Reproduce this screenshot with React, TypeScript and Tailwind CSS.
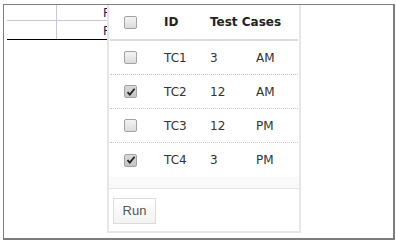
import React from 'react';

type Row = { id: string; count: string; period: string; checked: boolean };

const rows: Row[] = [
  { id: 'TC1', count: '3', period: 'AM', checked: false },
  { id: 'TC2', count: '12', period: 'AM', checked: true },
  { id: 'TC3', count: '12', period: 'PM', checked: false },
  { id: 'TC4', count: '3', period: 'PM', checked: true },
];

function Box({ checked }: { checked: boolean }) {
  return (
    <span
      className={`ml-[14px] flex h-[13px] w-[13px] items-center justify-center rounded-[2px] border border-[#a3a3a3] ${
        checked
          ? 'bg-gradient-to-b from-[#d9d9d9] to-[#c4c4c4]'
          : 'bg-gradient-to-b from-[#f4f4f4] to-[#dcdcdc]'
      }`}
    >
      {checked && (
        <svg width="10" height="10" viewBox="0 0 10 10">
          <path d="M1.5 5.2 L3.8 7.6 L8.6 1.8" fill="none" stroke="#222" strokeWidth="1.8" />
        </svg>
      )}
    </span>
  );
}

export default function App() {
  return (
    <div className="h-[243px] w-[396px] bg-white pl-[3px] pt-[4px] font-['DejaVu_Sans',sans-serif]">
      <div className="relative h-[236px] w-[392px] border-b-2 border-l border-r-2 border-t border-[#7d7d7d] bg-white">
        {/* table behind the dropdown */}
        <div className="ml-[3px] w-[101px] overflow-hidden text-[12px] text-[#1c1c5c]">
          <div className="flex h-[16px] border-b border-[#c6c6de]">
            <div className="w-[50px] shrink-0 border-r border-[#c6c6de]" />
            <div className="whitespace-nowrap pl-[46px] pt-[1px] leading-[14px]">F</div>
          </div>
          <div className="flex h-[19px] border-b border-black">
            <div className="w-[50px] shrink-0 border-r border-[#c6c6de]" />
            <div className="whitespace-nowrap pl-[46px] pt-[3px] leading-[14px]">F</div>
          </div>
        </div>

        {/* dropdown panel */}
        <div className="absolute left-[103px] top-0 flex h-[228px] w-[194px] flex-col border-x-2 border-b-2 border-[#e6e6e6] bg-white text-[12px] text-[#333]">
          <div className="px-[1px]">
            <div className="grid h-[36px] grid-cols-[54px_46px_1fr] items-center border-b-2 border-[#dcdcdc] font-bold text-[#222]">
              <Box checked={false} />
              <span>ID</span>
              <span>Test Cases</span>
            </div>
            {rows.map((r, i) => (
              <div
                key={r.id}
                className={`grid h-[34px] grid-cols-[54px_46px_46px_1fr] items-center ${
                  i < rows.length - 1 ? 'border-b border-dotted border-[#c8c8c8]' : ''
                }`}
              >
                <Box checked={r.checked} />
                <span>{r.id}</span>
                <span>{r.count}</span>
                <span>{r.period}</span>
              </div>
            ))}
          </div>
          <div className="h-[11px] bg-[#fafafa]" />
          <div className="flex-1 border-t border-[#e4e4e4] pl-[4px] pt-[9px]">
            <button className="h-[26px] w-[43px] border border-[#dcdcdc] bg-gradient-to-b from-white to-[#f3f3f3] font-['Liberation_Sans',sans-serif] text-[13px] text-[#555]">
              Run
            </button>
          </div>
        </div>
      </div>
    </div>
  );
}
